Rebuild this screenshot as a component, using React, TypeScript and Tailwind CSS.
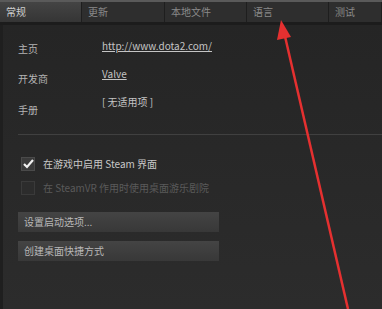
import React from "react";

const font = { fontFamily: '"Noto Sans CJK SC", "Liberation Sans", sans-serif' };

export default function App() {
  const tabs = [
    { t: "常规", w: "w-[82px]", active: true },
    { t: "更新", w: "w-[83px]" },
    { t: "本地文件", w: "w-[82px]" },
    { t: "语言", w: "w-[82px]" },
    { t: "测试", w: "flex-1" },
  ];
  return (
    <div className="relative w-[382px] h-[309px] overflow-hidden bg-[#282828] text-[10px] leading-[14px]" style={font}>
      <div className="h-[2px] bg-[#5a5a5a]" />
      <div className="flex h-[20px] bg-[#2e2e2e]">
        {tabs.map((tab, i) => (
          <div
            key={i}
            className={`${tab.w} flex items-center pl-[6px] border-r border-[#1e1e1e] ${
              tab.active ? "bg-gradient-to-b from-[#444444] to-[#353535] text-[#d0d0d0]" : "text-[#8a8a8a]"
            }`}
          >
            {tab.t}
          </div>
        ))}
      </div>
      <div className="h-[3px] bg-[#1c1c1c]" />
      <div className="flex h-[284px]">
        <div className="w-[3px] bg-[#1f1f1f]" />
        <div className="flex-1 bg-gradient-to-b from-[#252525] to-[#2c2c2c] pl-[15px] pt-[14px]">
          <div className="flex">
            <div className="w-[84px] flex flex-col text-[#b4b4b4] pt-[3px]">
              <div className="h-[30px]">主页</div>
              <div className="h-[31px]">开发商</div>
              <div className="h-[25px]">手册</div>
            </div>
            <div className="flex flex-col text-[#c4c4c4]">
              <div className="h-[28px] underline">http://www.dota2.com/</div>
              <div className="h-[28px] underline">Valve</div>
              <div className="h-[28px]">[ 无适用项 ]</div>
            </div>
          </div>
          <div className="mt-[6px] h-px bg-[#404040]" />
          <div className="mt-[22px] flex items-center gap-[8px] pl-[3px] text-[#c8c8c8]">
            <div className="w-[14px] h-[14px] bg-[#3a3a3a] border border-[#4a4a4a] flex items-center justify-center">
              <svg width="11" height="10" viewBox="0 0 11 10">
                <path d="M1 5 L4 8 L10 1" stroke="#f0f0f0" strokeWidth="2.2" fill="none" />
              </svg>
            </div>
            <span>在游戏中启用 Steam 界面</span>
          </div>
          <div className="mt-[10px] flex items-center gap-[8px] pl-[3px] text-[#5a5a5a]">
            <div className="w-[14px] h-[14px] bg-[#2c2c2c] border border-[#3a3a3a]" />
            <span>在 SteamVR 作用时使用桌面游乐剧院</span>
          </div>
          <div className="mt-[17px] w-[201px] h-[20px] bg-gradient-to-b from-[#444444] to-[#383838] text-[#b8b8b8] flex items-center pl-[6px]">
            设置启动选项...
          </div>
          <div className="mt-[9px] w-[201px] h-[20px] bg-gradient-to-b from-[#444444] to-[#383838] text-[#b8b8b8] flex items-center pl-[6px]">
            创建桌面快捷方式
          </div>
        </div>
      </div>
      <svg className="absolute left-0 top-0 pointer-events-none" width="382" height="309" viewBox="0 0 382 309">
        <line x1="348" y1="309" x2="284" y2="32" stroke="#e53030" strokeWidth="2.5" />
        <polygon points="281,20 277,40 291,37" fill="#e53030" />
      </svg>
    </div>
  );
}
